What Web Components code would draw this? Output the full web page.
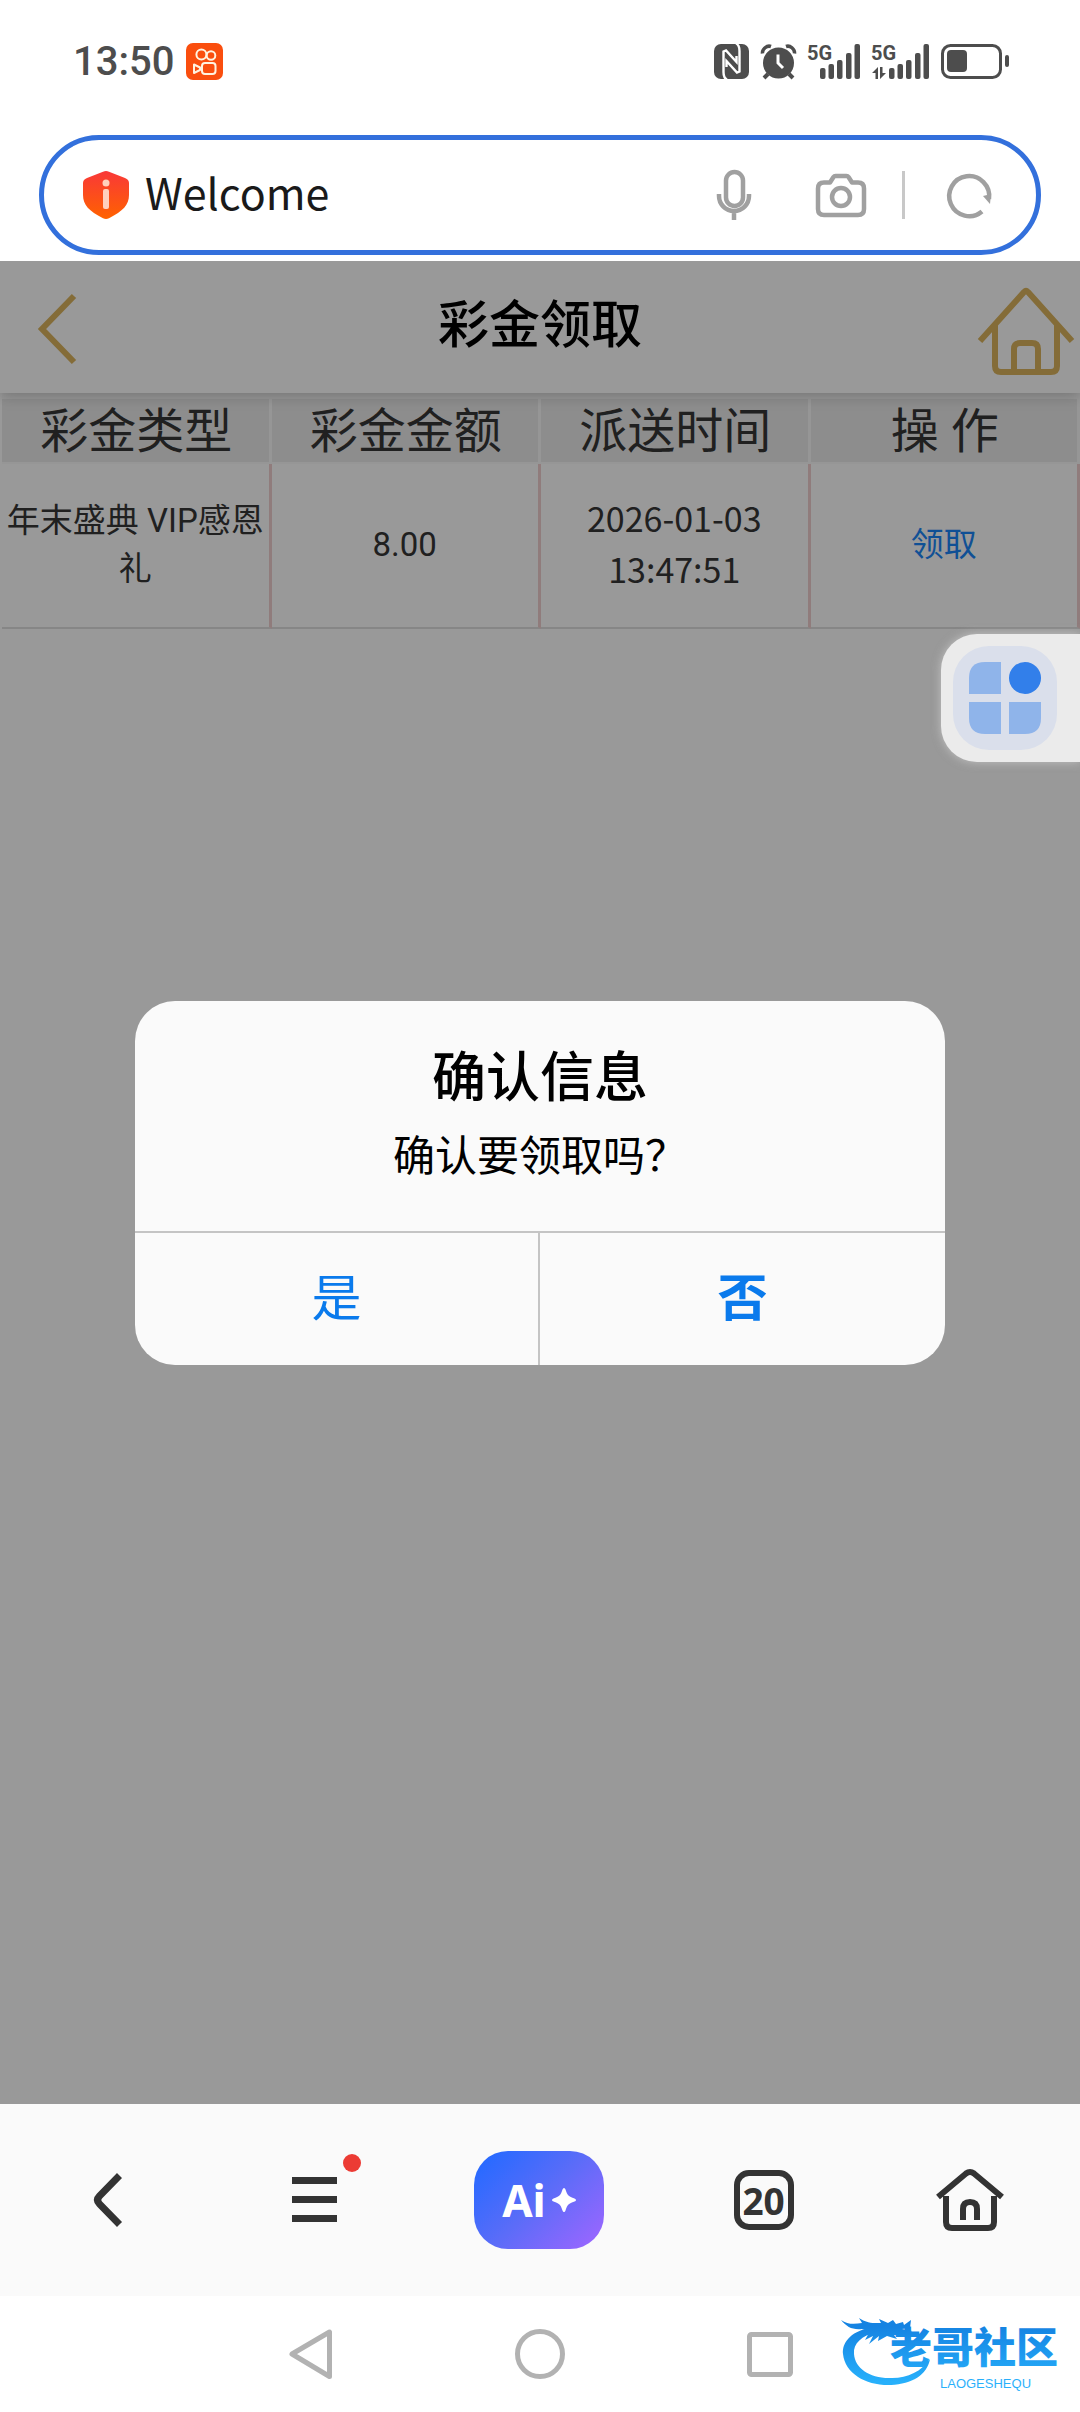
<!DOCTYPE html>
<html lang="zh-CN">
<head>
<meta charset="UTF-8">
<meta name="viewport" content="width=device-width, initial-scale=1">
<title>彩金领取</title>
<style>
    body {
        margin: 0;
        background: #fff;
        font-family: Roboto, "Noto Sans CJK SC", sans-serif;
    }
</style>
</head>
<body>
<phone-screen>
    <phone-status slot="top" time="13:50"></phone-status>
    <address-bar slot="top" value="Welcome"></address-bar>

    <page-header>彩金领取</page-header>
    <bonus-table></bonus-table>
    <confirm-dialog slot="overlay" yes="是" no="否">
        <span slot="title">确认信息</span>
        确认要领取吗？
    </confirm-dialog>
    <quick-panel slot="overlay"></quick-panel>

    <browser-toolbar slot="bottom" tabs="20"></browser-toolbar>
    <system-nav slot="bottom">
        <site-mark name="老哥社区" latin="LAOGESHEQU"></site-mark>
    </system-nav>
</phone-screen>

<script>
// 全コンポーネント共通のスタイル
const baseStyle = `
    * { box-sizing: border-box; }
    svg { display: block; overflow: visible; }
    button {
        display: flex;
        align-items: center;
        justify-content: center;
        margin: 0;
        padding: 0;
        border: 0;
        background: none;
        color: inherit;
        font: inherit;
        cursor: pointer;
    }
`;

// 画面全体
class PhoneScreen extends HTMLElement {
    constructor() {
        super();
        this.attachShadow({mode: 'open'});
    }

    connectedCallback() {
        this.shadowRoot.innerHTML = `
            <style>
                ${baseStyle}
                :host {
                    display: flex;
                    flex-direction: column;
                    min-height: 100vh;
                }

                main {
                    position: relative;
                    flex: 1;
                    overflow: hidden;
                    background: #fff;
                }

                .shade {
                    position: absolute;
                    inset: 0;
                    display: flex;
                    align-items: center;
                    justify-content: center;
                    background: rgba(0, 0, 0, 0.4);
                }
            </style>
            <slot name="top"></slot>
            <main>
                <slot></slot>
                <div class="shade"><slot name="overlay"></slot></div>
            </main>
            <slot name="bottom"></slot>
        `;
    }
}
customElements.define('phone-screen', PhoneScreen);

// ステータスバー
class PhoneStatus extends HTMLElement {
    constructor() {
        super();
        this.attachShadow({mode: 'open'});
    }

    connectedCallback() {
        const time = this.getAttribute('time');

        this.shadowRoot.innerHTML = `
            <style>
                ${baseStyle}
                :host {
                    display: flex;
                    align-items: center;
                    justify-content: space-between;
                    height: 123px;
                    padding: 0 71px 0 73px;
                    color: #4d4d4d;
                }

                .group {
                    display: flex;
                    align-items: center;
                    gap: 12px;
                }

                time {
                    font-size: 40px;
                    font-weight: 500;
                    line-height: 48px;
                }

                text {
                    font: bold 20px Roboto, sans-serif;
                }
            </style>
            <div class="group">
                <time>${time}</time>
                <svg width="37" height="37" viewBox="0 0 37 37">
                    <rect width="37" height="37" rx="7" fill="#fa4e0e"/>
                    <g fill="none" stroke="#fff3e0" stroke-width="2">
                        <circle cx="15.4" cy="11.5" r="5"/>
                        <circle cx="25" cy="12.5" r="4.3"/>
                        <rect x="16" y="20" width="13.5" height="11" rx="3"/>
                        <path d="M8 21.5v8.5l6-3v-2.5z" stroke-linejoin="round"/>
                    </g>
                </svg>
            </div>
            <div class="group">
                <svg width="35" height="35" viewBox="0 0 35 35">
                    <rect width="35" height="35" rx="7" fill="currentColor"/>
                    <path d="M13 35.500C9.500 34 9.500 31 9.500 28V7.500L12 6.500L22.500 18V12M22 -.5C25.500 1 25.500 4 25.500 7V27.500L23 28.500L12.500 17V23" fill="none" stroke="#fff" stroke-width="2.400"/>
                </svg>
                <svg width="35" height="35" viewBox="0 0 35 35">
                    <circle cx="17.500" cy="19" r="15.500" fill="currentColor"/>
                    <path d="M1.500 9.500C1 5 6 1 10 2.500M33.500 9.500C34 5 29 1 25 2.500" fill="none" stroke="currentColor" stroke-width="3.500"/>
                    <path d="M7 30l-4 4M28 30l4 4" stroke="currentColor" stroke-width="4"/>
                    <path d="M17 10.500V19l5 5" fill="none" stroke="#fff" stroke-width="3"/>
                </svg>
                <svg width="52" height="35" viewBox="0 0 52 35" fill="currentColor">
                    <text x="-1" y="16">5G</text>
                    <rect x="12" y="24" width="5.500" height="11" rx="2"/>
                    <rect x="20.500" y="20" width="5.500" height="15" rx="2"/>
                    <rect x="29" y="16" width="5.500" height="19" rx="2"/>
                    <rect x="38" y="9" width="5.500" height="26" rx="2"/>
                    <rect x="46.500" y="0" width="5.500" height="35" rx="2"/>
                </svg>
                <svg width="57" height="35" viewBox="0 0 57 35" fill="currentColor">
                    <text x="-1" y="16">5G</text>
                    <path d="M0 29l6-6v12H3.500v-6zM8 23h2.500v6H14l-6 6z"/>
                    <rect x="17" y="24" width="5.500" height="11" rx="2"/>
                    <rect x="25.500" y="20" width="5.500" height="15" rx="2"/>
                    <rect x="34" y="16" width="5.500" height="19" rx="2"/>
                    <rect x="43" y="9" width="5.500" height="26" rx="2"/>
                    <rect x="51.500" y="0" width="5.500" height="35" rx="2"/>
                </svg>
                <svg width="68" height="35" viewBox="0 0 68 35">
                    <rect x="1.500" y="1.500" width="58" height="32" rx="8" fill="none" stroke="currentColor" stroke-width="3"/>
                    <rect x="6" y="6" width="20" height="22" rx="4" fill="currentColor"/>
                    <rect x="64" y="11" width="4" height="12" rx="2" fill="currentColor"/>
                </svg>
            </div>
        `;
    }
}
customElements.define('phone-status', PhoneStatus);

// アドレスバー
class AddressBar extends HTMLElement {
    constructor() {
        super();
        this.attachShadow({mode: 'open'});
    }

    connectedCallback() {
        const value = this.getAttribute('value');

        this.shadowRoot.innerHTML = `
            <style>
                ${baseStyle}
                :host {
                    display: block;
                    padding: 12px 39px 6px;
                }

                .box {
                    display: flex;
                    align-items: center;
                    height: 120px;
                    padding: 0 44px 0 39px;
                    border: 5px solid #3370dc;
                    border-radius: 60px;
                    color: #a0a0a0;
                }

                input {
                    flex: 1;
                    min-width: 0;
                    height: 72px;
                    margin: 0 16px;
                    padding: 0 0 8px;
                    border: 0;
                    outline: 0;
                    background: none;
                    color: #1a1a1a;
                    font-family: "Noto Sans CJK SC", sans-serif;
                    font-size: 43px;
                }

                .line {
                    width: 3px;
                    height: 48px;
                    margin: 0 42px 0 36px;
                    background: #c8c8c8;
                }

                .camera {
                    margin-left: 65px;
                }
            </style>
            <div class="box">
                <svg width="46" height="48" viewBox="0 0 46 48">
                    <defs>
                        <linearGradient id="shield" x1="0" y1="0" x2="0" y2="1">
                            <stop offset="0" stop-color="#f93838"/>
                            <stop offset="1" stop-color="#ff6200"/>
                        </linearGradient>
                    </defs>
                    <path d="M20 .8Q23-.6 26 .8L42 7Q46 8.500 46 12V24C46 34 40 40 26 47.200Q23 48.600 20 47.200C6 40 0 34 0 24V12Q0 8.500 4 7z" fill="url(#shield)"/>
                    <circle cx="23" cy="12" r="3.500" fill="#ffd0bd"/>
                    <rect x="20" y="18" width="6" height="20" rx="2" fill="#ffd0bd"/>
                </svg>
                <input type="text" aria-label="网址" value="${value}">
                <button aria-label="语音">
                    <svg width="34" height="50" viewBox="0 0 34 50" fill="none" stroke="currentColor" stroke-width="4.500">
                        <rect x="9" y="2" width="17" height="34" rx="8.500"/>
                        <path d="M2 24v2a15 15 0 0 0 30 0v-2M17 41v9"/>
                    </svg>
                </button>
                <button class="camera" aria-label="拍照">
                    <svg width="50" height="43" viewBox="0 0 50 43" fill="none" stroke="currentColor" stroke-width="4.500">
                        <path d="M8 8.500h6l3.500-5.500q.7-1 2-1h11q1.300 0 2 1L36 8.500h6q6 0 6 6V35q0 6-6 6H8q-6 0-6-6V14.500q0-6 6-6z" stroke-linejoin="round"/>
                        <circle cx="25" cy="23" r="9"/>
                    </svg>
                </button>
                <span class="line"></span>
                <button aria-label="刷新">
                    <svg width="45" height="45" viewBox="0 0 45 45">
                        <path d="M35 38.500A20 20 0 1 1 42 26" fill="none" stroke="currentColor" stroke-width="4.500"/>
                        <path d="M36 23l8-2-1 10z" fill="currentColor"/>
                    </svg>
                </button>
            </div>
        `;
    }
}
customElements.define('address-bar', AddressBar);

// ページのヘッダー
class PageHeader extends HTMLElement {
    constructor() {
        super();
        this.attachShadow({mode: 'open'});
    }

    connectedCallback() {
        this.shadowRoot.innerHTML = `
            <style>
                ${baseStyle}
                :host {
                    position: relative;
                    display: grid;
                    grid-template-columns: 114px 1fr 114px;
                    align-items: center;
                    height: 132px;
                    background: #fff;
                    box-shadow: 0 2px 14px rgba(0, 0, 0, 0.25);
                    color: #dcb55e;
                }

                h1 {
                    margin: 0;
                    padding-bottom: 2px;
                    color: #000;
                    font-size: 51px;
                    font-weight: 500;
                    line-height: 72px;
                    text-align: center;
                }

                a {
                    display: flex;
                    justify-content: center;
                    padding-top: 4px;
                    color: inherit;
                }

                h1 + a {
                    padding-top: 8px;
                    padding-left: 6px;
                }
            </style>
            <a href="#back" aria-label="返回">
                <svg width="38" height="70" viewBox="0 0 38 70" fill="none" stroke="currentColor" stroke-width="6">
                    <path d="M36 2L4 35l32 33"/>
                </svg>
            </a>
            <h1><slot></slot></h1>
            <a href="#home" aria-label="首页">
                <svg width="96" height="88" viewBox="0 0 96 88" fill="none" stroke="currentColor" stroke-width="6" stroke-linejoin="round">
                    <path d="M2 54L46 5q2-2 4 0L94 54"/>
                    <path d="M17 38v41q0 6 6 6h50q6 0 6-6V38"/>
                    <path d="M36 85V62q0-6 6-6h12q6 0 6 6v23"/>
                </svg>
            </a>
        `;
    }
}
customElements.define('page-header', PageHeader);

// 彩金の一覧表
class BonusTable extends HTMLElement {
    constructor() {
        super();
        this.attachShadow({mode: 'open'});
    }

    connectedCallback() {
        this.shadowRoot.innerHTML = `
            <style>
                ${baseStyle}
                :host {
                    display: block;
                    padding-left: 2px;
                }

                table {
                    width: 100%;
                    table-layout: fixed;
                    border-collapse: separate;
                    border-spacing: 0;
                    color: #363636;
                    text-align: center;
                }

                th {
                    height: 71px;
                    padding: 3px 0 0 2px;
                    border: solid #fbfbfb;
                    border-width: 6px 3px 2px 0;
                    background: #ebebeb;
                    font-size: 48px;
                    font-weight: 400;
                    line-height: 60px;
                }

                td {
                    height: 165px;
                    padding: 0 2px 2px;
                    border-right: 3px solid #f0cfcf;
                    border-bottom: 2px solid #e0e0e0;
                    font-size: 33px;
                    line-height: 48px;
                }

                time {
                    font-family: "Noto Sans CJK SC", sans-serif;
                    font-size: 34px;
                }

                a {
                    color: #1b86f8;
                    text-decoration: none;
                }
            </style>
            <table>
                <thead>
                    <tr><th>彩金类型</th><th>彩金金额</th><th>派送时间</th><th>操 作</th></tr>
                </thead>
                <tbody>
                    <tr>
                        <td>年末盛典 VIP感恩礼</td>
                        <td>8.00</td>
                        <td><time>2026-01-03<br>13:47:51</time></td>
                        <td><a href="#receive">领取</a></td>
                    </tr>
                </tbody>
            </table>
        `;
    }
}
customElements.define('bonus-table', BonusTable);

// 確認ダイアログ
class ConfirmDialog extends HTMLElement {
    constructor() {
        super();
        this.attachShadow({mode: 'open'});
    }

    connectedCallback() {
        const yes = this.getAttribute('yes');
        const no = this.getAttribute('no');

        this.shadowRoot.innerHTML = `
            <style>
                ${baseStyle}
                :host {
                    display: block;
                    width: 75%;
                    overflow: hidden;
                    border-radius: 40px;
                    background: #fafafa;
                    color: #000;
                    text-align: center;
                }

                .body {
                    padding: 46px 40px 44px;
                }

                h2 {
                    margin: 0 0 16px;
                    font-size: 54px;
                    font-weight: 500;
                    line-height: 64px;
                }

                p {
                    margin: 0;
                    font-size: 42px;
                    line-height: 60px;
                }

                .actions {
                    display: grid;
                    grid-template-columns: 1fr 1fr;
                    border-top: 2px solid #c4c4c4;
                }

                button {
                    height: 132px;
                    padding-bottom: 10px;
                    border-right: 2px solid #c4c4c4;
                    color: #0a7aec;
                    font-size: 50px;
                }

                button + button {
                    border-right: 0;
                    font-weight: 700;
                }
            </style>
            <div class="body">
                <h2><slot name="title"></slot></h2>
                <p><slot></slot></p>
            </div>
            <div class="actions">
                <button>${yes}</button>
                <button>${no}</button>
            </div>
        `;
    }
}
customElements.define('confirm-dialog', ConfirmDialog);

// 右端に浮かぶパネル
class QuickPanel extends HTMLElement {
    constructor() {
        super();
        this.attachShadow({mode: 'open'});
    }

    connectedCallback() {
        this.shadowRoot.innerHTML = `
            <style>
                ${baseStyle}
                :host {
                    position: absolute;
                    top: 373px;
                    right: 0;
                    display: block;
                    padding: 12px 23px 12px 12px;
                    border-radius: 36px 0 0 36px;
                    background: #ebebeb;
                    box-shadow: 0 0 10px rgba(235, 235, 235, 0.5);
                }

                button {
                    width: 104px;
                    height: 104px;
                    border-radius: 36px;
                    background: #dadfeb;
                }
            </style>
            <button aria-label="快捷面板">
                <svg width="72" height="72" viewBox="0 0 72 72" fill="#8fb4ea">
                    <path d="M32 0v32H0V16Q0 0 16 0z"/>
                    <path d="M0 40h32v32H16Q0 72 0 56z"/>
                    <path d="M40 40h32v16q0 16-16 16H40z"/>
                    <circle cx="56" cy="16" r="16" fill="#327fea"/>
                </svg>
            </button>
        `;
    }
}
customElements.define('quick-panel', QuickPanel);

// ブラウザ下部のツールバー
class BrowserToolbar extends HTMLElement {
    constructor() {
        super();
        this.attachShadow({mode: 'open'});
    }

    connectedCallback() {
        const tabs = this.getAttribute('tabs');

        this.shadowRoot.innerHTML = `
            <style>
                ${baseStyle}
                :host {
                    display: grid;
                    grid-template-columns: 12fr 11fr 14fr 11fr 12fr;
                    align-items: center;
                    justify-items: center;
                    height: 192px;
                    padding-right: 2px;
                    background: #fafafa;
                    color: #333;
                    font-family: "Noto Sans", sans-serif;
                }

                .menu {
                    position: relative;
                }

                .menu::after {
                    content: "";
                    position: absolute;
                    top: -23px;
                    right: -24px;
                    width: 18px;
                    height: 18px;
                    border-radius: 50%;
                    background: #ec3b34;
                }

                .ai {
                    gap: 6px;
                    width: 130px;
                    height: 98px;
                    border-radius: 34px;
                    background: linear-gradient(135deg, #2a6aff 10%, #5b6cf8 50%, #9a66ff 95%);
                    color: #fff;
                    font-size: 44px;
                    font-weight: 700;
                }

                .tabs {
                    width: 60px;
                    height: 60px;
                    border: 6px solid #333;
                    border-radius: 15px;
                    font-size: 37px;
                    font-weight: 700;
                }
            </style>
            <button aria-label="后退">
                <svg width="28" height="54" viewBox="0 0 28 54" fill="none" stroke="currentColor" stroke-width="7">
                    <path d="M25.500 2.500L5.500 23q-4 4 0 8l20 20.500"/>
                </svg>
            </button>
            <button class="menu" aria-label="菜单">
                <svg width="45" height="46" viewBox="0 0 45 46" fill="currentColor">
                    <rect width="45" height="7"/>
                    <rect y="19" width="45" height="7"/>
                    <rect y="38" width="45" height="7"/>
                </svg>
            </button>
            <button class="ai">
                Ai
                <svg width="24" height="24" viewBox="0 0 24 24" fill="#fff">
                    <path d="M12 0Q13 0 13.500 1.500C15.500 7.500 16.500 8.500 22.500 10.500Q24 11 24 12T22.500 13.500C16.500 15.500 15.500 16.500 13.500 22.500Q13 24 12 24T10.500 22.500C8.500 16.500 7.500 15.500 1.500 13.500Q0 13 0 12T1.500 10.500C7.500 8.500 8.500 7.500 10.500 1.500Q11 0 12 0z"/>
                </svg>
            </button>
            <button class="tabs">${tabs}</button>
            <button aria-label="主页">
                <svg width="68" height="62" viewBox="0 0 68 62" fill="none" stroke="currentColor" stroke-width="6">
                    <path d="M2 28L30 4.500q4-3 8 0L66 28"/>
                    <path d="M10 27v26q0 6 6 6h36q6 0 6-6V27"/>
                    <path d="M27 51V40q0-7 7-7t7 7v11"/>
                </svg>
            </button>
        `;
    }
}
customElements.define('browser-toolbar', BrowserToolbar);

// システムのナビゲーション
class SystemNav extends HTMLElement {
    constructor() {
        super();
        this.attachShadow({mode: 'open'});
    }

    connectedCallback() {
        this.shadowRoot.innerHTML = `
            <style>
                ${baseStyle}
                :host {
                    position: relative;
                    display: flex;
                    align-items: center;
                    justify-content: center;
                    gap: 170px;
                    height: 116px;
                    background: #fff;
                    color: #b2b2b2;
                }

                button {
                    width: 60px;
                    height: 60px;
                }

                slot {
                    position: absolute;
                    right: 14px;
                    bottom: 24px;
                    display: block;
                }
            </style>
            <button aria-label="返回">
                <svg width="43" height="50" viewBox="0 0 43 50" fill="none" stroke="currentColor" stroke-width="5" stroke-linejoin="round">
                    <path d="M40.500 3v44.500L3 25z"/>
                </svg>
            </button>
            <button aria-label="桌面">
                <svg width="50" height="50" viewBox="0 0 50 50" fill="none" stroke="currentColor" stroke-width="5">
                    <circle cx="25" cy="25" r="22.500"/>
                </svg>
            </button>
            <button aria-label="最近任务">
                <svg width="46" height="45" viewBox="0 0 46 45" fill="none" stroke="currentColor" stroke-width="5">
                    <rect x="2.500" y="2.500" width="41" height="40" rx="2"/>
                </svg>
            </button>
            <slot></slot>
        `;
    }
}
customElements.define('system-nav', SystemNav);

// サイトのロゴ
class SiteMark extends HTMLElement {
    constructor() {
        super();
        this.attachShadow({mode: 'open'});
    }

    connectedCallback() {
        const name = this.getAttribute('name');
        const latin = this.getAttribute('latin');

        this.shadowRoot.innerHTML = `
            <style>
                ${baseStyle}
                :host {
                    display: block;
                }

                text {
                    font-family: "Noto Sans CJK SC", sans-serif;
                    font-size: 42px;
                    font-weight: 900;
                }

                .latin {
                    font-family: "Liberation Sans", sans-serif;
                    font-size: 13px;
                    font-weight: 400;
                }
            </style>
            <svg width="226" height="72" viewBox="0 0 226 72">
                <defs>
                    <linearGradient id="blue" gradientUnits="userSpaceOnUse" x1="0" y1="10" x2="0" y2="66">
                        <stop offset="0" stop-color="#1583e2"/>
                        <stop offset="1" stop-color="#27b0fb"/>
                    </linearGradient>
                </defs>
                <g fill="url(#blue)">
                    <path d="M29 12C10 16 2 27 3 38C5 58 27 70 51 69C72 68 87 59 90 43C81 56 66 63 49 62C29 62 15 52 14 38C13 27 22 20 36 16z"/>
                    <path d="M1 4C8 9 15 8 22 7L19 2C28 8 35 7 41 7L39 3L48 7L53 4L56 8L63 6L64 9L71 4L70 12L62 13L72 15L68 18L58 17L66 20L54 19L57 23L47 20L38 25L39 20L29 28L33 20L25 24L30 15L22 13C12 14 7 11 1 4z"/>
                    <text x="50" y="47">${name}</text>
                    <text class="latin" x="100" y="72">${latin}</text>
                </g>
            </svg>
        `;
    }
}
customElements.define('site-mark', SiteMark);
</script>
</body>
</html>
